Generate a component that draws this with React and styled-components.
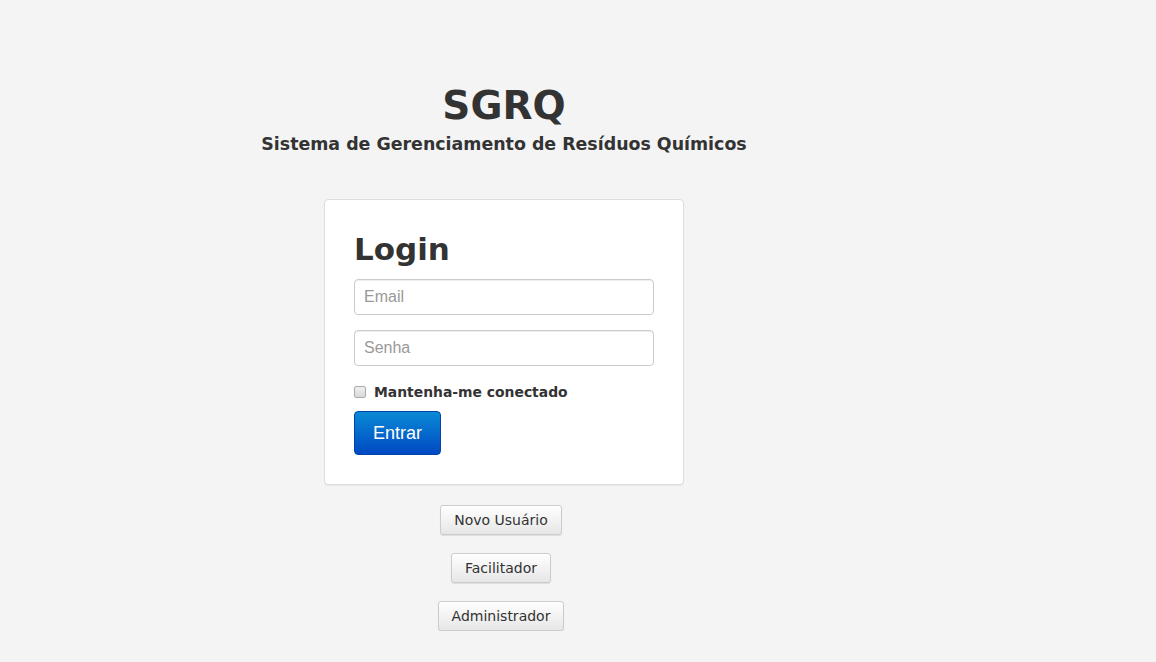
import React from "react";
import styled, { createGlobalStyle } from "styled-components";

const GlobalStyle = createGlobalStyle`
  html, body {
    margin: 0;
    padding: 0;
    background: #f4f4f4;
    font-family: "DejaVu Sans", Verdana, sans-serif;
    color: #333;
  }
`;

const Page = styled.div`
  width: 1008px;
  display: flex;
  flex-direction: column;
  align-items: center;
  padding-top: 81px;
`;

const Title = styled.h1`
  margin: 0;
  font-size: 39px;
  line-height: 50px;
  font-weight: bold;
  color: #333;
`;

const Subtitle = styled.h4`
  margin: 2px 0 0;
  font-size: 17.4px;
  line-height: 22px;
  font-weight: bold;
  color: #333;
`;

const Card = styled.div`
  margin-top: 44px;
  width: 300px;
  padding: 29px;
  background: #fff;
  border: 1px solid #ddd;
  border-radius: 4px;
  box-shadow: 0 1px 1px rgba(0, 0, 0, 0.05);
  display: flex;
  flex-direction: column;
`;

const CardTitle = styled.h2`
  margin: 0 0 9px;
  font-size: 31px;
  line-height: 41px;
  font-weight: bold;
  color: #333;
`;

const Input = styled.input`
  box-sizing: border-box;
  width: 300px;
  height: 36px;
  padding: 6px 9px;
  margin-bottom: ${(p) => p.$mb || 0}px;
  font-family: "Liberation Sans", Arial, sans-serif;
  font-size: 16px;
  color: #555;
  background: #fff;
  border: 1px solid #ccc;
  border-radius: 4px;
  box-shadow: inset 0 1px 1px rgba(0, 0, 0, 0.075);
  outline: none;
  &::placeholder {
    color: #999;
  }
`;

const CheckRow = styled.label`
  display: flex;
  align-items: center;
  gap: 8px;
  margin: 18px 0 11px;
  font-size: 13.9px;
  font-weight: bold;
  color: #333;
`;

const Check = styled.input`
  appearance: none;
  margin: 0;
  width: 12px;
  height: 12px;
  border: 1px solid #aaa;
  border-radius: 2px;
  background: linear-gradient(to bottom, #f0f0f0, #d8d8d8);
`;

const PrimaryButton = styled.button`
  align-self: flex-start;
  width: 87px;
  height: 44px;
  font-family: "Liberation Sans", Arial, sans-serif;
  font-size: 18px;
  color: #fff;
  border: 1px solid #0044aa;
  border-radius: 4px;
  background: linear-gradient(to bottom, #0a8ad4, #0049c4);
  cursor: pointer;
`;

const SmallButton = styled.button`
  margin-top: ${(p) => p.$mt}px;
  padding: 0 13px;
  height: 30px;
  font-family: "DejaVu Sans", Verdana, sans-serif;
  font-size: 14px;
  color: #333;
  border: 1px solid #ccc;
  border-radius: 3px;
  background: linear-gradient(to bottom, #fff, #e6e6e6);
  box-shadow: 0 1px 1px rgba(0, 0, 0, 0.1);
  cursor: pointer;
  transform: translateX(-3px);
`;

export default function App() {
  return (
    <>
      <GlobalStyle />
      <Page>
        <Title>SGRQ</Title>
        <Subtitle>Sistema de Gerenciamento de Resíduos Químicos</Subtitle>
        <Card>
          <CardTitle>Login</CardTitle>
          <Input placeholder="Email" $mb={15} />
          <Input placeholder="Senha" type="password" />
          <CheckRow>
            <Check type="checkbox" />
            Mantenha-me conectado
          </CheckRow>
          <PrimaryButton>Entrar</PrimaryButton>
        </Card>
        <SmallButton $mt={20}>Novo Usuário</SmallButton>
        <SmallButton $mt={18}>Facilitador</SmallButton>
        <SmallButton $mt={18}>Administrador</SmallButton>
      </Page>
    </>
  );
}
